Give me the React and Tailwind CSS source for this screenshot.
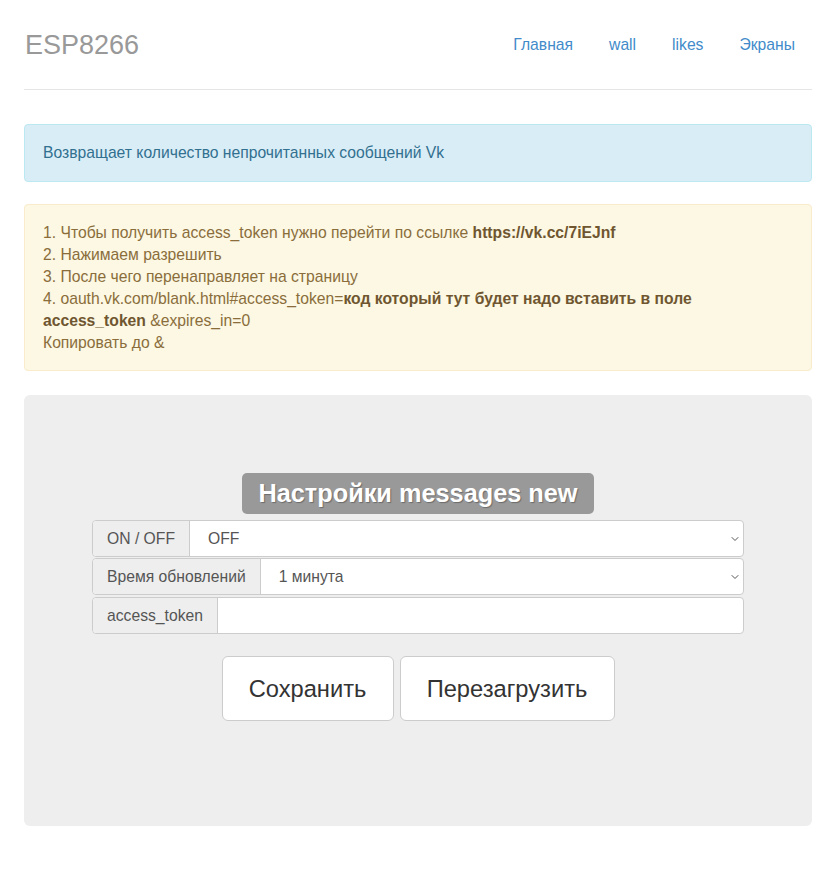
import { ChevronDown } from "lucide-react";

const nav = ["Главная", "wall", "likes", "Экраны"];

function SelectRow({ label, value }) {
  return (
    <div className="flex h-[37px] rounded-[4px] border border-[#ccc] bg-white">
      <span className="flex items-center rounded-l-[4px] border-r border-[#ccc] bg-[#eee] px-[14px] text-[#555]">
        {label}
      </span>
      <div className="relative flex flex-1 items-center">
        <span className="pl-[18px] text-[#555]">{value}</span>
        <ChevronDown className="absolute right-[2px] h-[12px] w-[12px] text-[#555]" strokeWidth={2} />
      </div>
    </div>
  );
}

export default function App() {
  return (
    <div className="min-h-[873px] bg-white font-['Liberation_Sans',Arial,sans-serif] text-[15.7px] leading-[22px] text-[#333]">
      <div className="mx-[24px] w-[788px]">
        <div className="flex items-center justify-between border-b border-[#e5e5e5] pt-[24px] pb-[22px]">
          <h3 className="pl-px text-[27px] leading-[43px] text-[#999]">ESP8266</h3>
          <nav className="-mt-[2px] flex pr-[17px]">
            {nav.map((n) => (
              <a key={n} className="px-[18px] text-[#428bca] last:pr-0" href="#">
                {n}
              </a>
            ))}
          </nav>
        </div>

        <div className="mt-[34px] rounded-[4px] border border-[#bce8f1] bg-[#d9edf7] px-[18px] py-[17px] text-[#31708f]">
          Возвращает количество непрочитанных сообщений Vk
        </div>

        <div className="mt-[22px] rounded-[4px] border border-[#faebcc] bg-[#fcf8e3] px-[18px] pt-[17px] pb-[16px] text-[#8a6d3b]">
          1. Чтобы получить access_token нужно перейти по ссылке <b className="text-[#6f5630]">https://vk.cc/7iEJnf</b>
          <br />
          2. Нажимаем разрешить
          <br />
          3. После чего перенаправляет на страницу
          <br />
          4. oauth.vk.com/blank.html#access_token=<b className="text-[#6f5630]">код который тут будет надо вставить в поле access_token</b> &amp;expires_in=0
          <br />
          Копировать до &amp;
        </div>

        <div className="mt-[24px] flex flex-col items-center rounded-[6px] bg-[#eee] pt-[78px] pb-[105px]">
          <h2 className="rounded-[5px] bg-[#999] px-[16px] text-[25.3px] font-bold leading-[41px] text-white [text-shadow:1px_1px_1px_rgba(0,0,0,0.3)]">
            Настройки messages new
          </h2>
          <div className="mt-[6px] flex w-[652px] flex-col gap-px">
            <SelectRow label="ON / OFF" value="OFF" />
            <SelectRow label="Время обновлений" value="1 минута" />
            <div className="mt-px flex h-[37px] rounded-[4px] border border-[#ccc] bg-white">
              <span className="flex items-center rounded-l-[4px] border-r border-[#ccc] bg-[#eee] px-[14px] text-[#555]">
                access_token
              </span>
              <input className="flex-1 px-[12px] outline-none" />
            </div>
          </div>
          <div className="mt-[22px] flex gap-[6px]">
            <button className="h-[65px] w-[172px] rounded-[6px] border border-[#ccc] bg-white text-[23.7px] text-[#333]">
              Сохранить
            </button>
            <button className="h-[65px] w-[215px] rounded-[6px] border border-[#ccc] bg-white text-[23.7px] text-[#333]">
              Перезагрузить
            </button>
          </div>
        </div>
      </div>
    </div>
  );
}
